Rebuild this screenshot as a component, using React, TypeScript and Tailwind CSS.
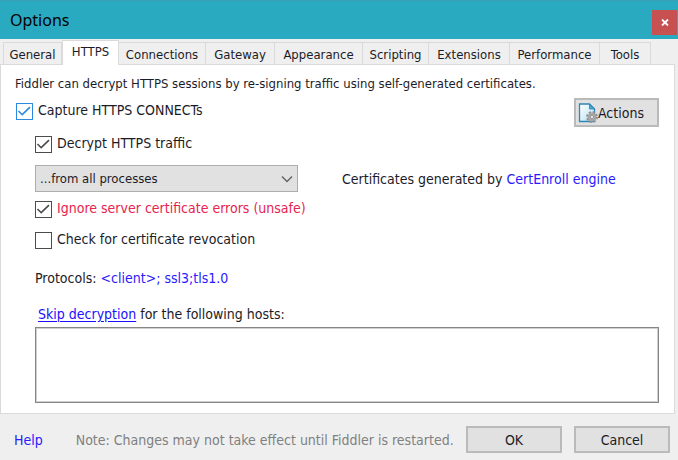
import { useState } from "react";
import type { ReactNode } from "react";
import clsx from "clsx";

const TABS = [
  { name: "General", width: "w-[59px]" },
  { name: "HTTPS", width: "w-[57px]" },
  { name: "Connections", width: "w-[87px]" },
  { name: "Gateway", width: "w-[69px]" },
  { name: "Appearance", width: "w-[88px]" },
  { name: "Scripting", width: "w-[66px]" },
  { name: "Extensions", width: "w-[81px]" },
  { name: "Performance", width: "w-[90px]" },
  { name: "Tools", width: "w-[51px]" },
];

interface CheckProps {
  checked: boolean;
  onChange: (value: boolean) => void;
  active?: boolean;
  danger?: boolean;
  children: ReactNode;
}

function Check({ checked, onChange, active, danger, children }: CheckProps) {
  return (
    <label className={clsx("flex w-fit items-end gap-[5px]", danger && "text-[#e8234f]")}>
      <span className={clsx("grid", active ? "text-[#2b8ade]" : "text-[#4c4c4c]")}>
        <input
          type="checkbox"
          checked={checked}
          onChange={(e) => onChange(e.target.checked)}
          className="col-start-1 row-start-1 size-[17px] appearance-none border border-current bg-white"
        />
        {checked && (
          <svg viewBox="0 0 17 17" className="pointer-events-none col-start-1 row-start-1 size-[17px]">
            <path d="M2.5 8 L6.2 11.7 L14 4.2" fill="none" stroke="currentColor" strokeWidth="1.6" />
          </svg>
        )}
      </span>
      <span className="pb-[2px]">{children}</span>
    </label>
  );
}

function ActionsIcon() {
  return (
    <svg viewBox="0 0 20 20" className="size-5 shrink-0">
      <defs>
        <linearGradient id="page" x1="0" y1="0" x2="1" y2="1">
          <stop offset="0" stopColor="#ffffff" />
          <stop offset="1" stopColor="#b5def2" />
        </linearGradient>
      </defs>
      <path d="M1.5 1 H11.5 L16.5 6 V18.5 H1.5 Z" fill="url(#page)" stroke="#2f87b5" strokeWidth="1.3" />
      <path d="M11.5 1 V6 H16.5 Z" fill="#4ba3cf" stroke="#2f87b5" strokeWidth="0.8" />
      <circle cx="14" cy="14" r="4.9" fill="none" stroke="#8c8c8c" strokeWidth="2" strokeDasharray="2.2 1.65" />
      <circle cx="14" cy="14" r="3.3" fill="#d8d8d8" stroke="#a4a4a4" strokeWidth="2.4" />
      <circle cx="14" cy="14" r="1.6" fill="#f0f0f0" stroke="#7a7a7a" strokeWidth="0.7" />
    </svg>
  );
}

export default function App() {
  const [tab, setTab] = useState("HTTPS");
  const [capture, setCapture] = useState(true);
  const [decrypt, setDecrypt] = useState(true);
  const [ignoreErrors, setIgnoreErrors] = useState(true);
  const [revocation, setRevocation] = useState(false);

  return (
    <div className="flex min-h-screen flex-col bg-[#efefef] font-['DejaVu_Sans_Condensed','Noto_Sans',sans-serif] text-[14px] leading-4 text-[#1c1c28]">
      <header className="flex h-[39px] items-center justify-between border-t border-[#3d9fb4] bg-[#29aac1] pl-[10px] pr-px">
        <h1 className="font-['Noto_Sans',sans-serif] text-[16px] text-black">Options</h1>
        <button aria-label="Close" className="mt-[5px] flex size-[25px] items-center justify-center bg-[#c75050]">
          <svg viewBox="0 0 8 7" className="h-[7px] w-2">
            <path d="M1 0.5 L7 6.5 M7 0.5 L1 6.5" stroke="white" strokeWidth="1.8" />
          </svg>
        </button>
      </header>

      <nav role="tablist" className="flex h-[25px] items-end pl-[3px] text-[13px]">
        {TABS.map(({ name, width }) => (
          <button
            key={name}
            role="tab"
            aria-selected={tab === name}
            onClick={() => setTab(name)}
            className={clsx(
              "shrink-0 whitespace-nowrap border-[#dadada]",
              width,
              tab === name
                ? "z-10 -mb-px h-[25px] border-x border-t bg-white pb-[2px]"
                : "h-[22px] border-r border-t bg-[#efefef] pt-[2px] first:border-l"
            )}
          >
            {name}
          </button>
        ))}
      </nav>

      <main className="mr-[3px] flex flex-1 flex-col border border-[#dadada] bg-white pb-[9px] pl-[14px] pr-[15px] pt-[11px]">
        <p className="whitespace-nowrap text-[13px]">
          Fiddler can decrypt HTTPS sessions by re-signing traffic using self-generated certificates.
        </p>
        <div className="mt-[6px] flex items-start justify-between">
          <div className="pl-px pt-1">
            <Check checked={capture} onChange={setCapture} active>
              Capture HTTPS CONNECTs
            </Check>
          </div>
          <button className="flex h-[29px] w-[85px] items-center border-2 border-[#bababa] bg-[#e1e1e1] pl-[2px]">
            <ActionsIcon />
            Actions
          </button>
        </div>

        <div className="flex flex-1 flex-col pl-5 pt-2">
          <Check checked={decrypt} onChange={setDecrypt}>
            Decrypt HTTPS traffic
          </Check>
          <div className="mt-3 flex items-center gap-11">
            <div className="grid w-[263px] items-center">
              <select
                aria-label="Decrypt traffic from"
                className="col-start-1 row-start-1 h-[27px] appearance-none border border-[#adadad] bg-[#e1e1e1] pl-1 text-[13px]"
              >
                <option>...from all processes</option>
                <option>...from browsers only</option>
                <option>...from non-browsers only</option>
                <option>...from remote clients only</option>
              </select>
              <svg
                viewBox="0 0 12 8"
                className="pointer-events-none col-start-1 row-start-1 mr-[5px] h-2 w-3 justify-self-end"
              >
                <path d="M1 1.5 L6 6.5 L11 1.5" fill="none" stroke="#666666" strokeWidth="1.5" />
              </svg>
            </div>
            <p className="whitespace-nowrap">
              Certificates generated by{" "}
              <a href="#engine" className="text-[#2a1aff]">
                CertEnroll engine
              </a>
            </p>
          </div>
          <div className="mt-2 flex flex-col gap-[13px]">
            <Check checked={ignoreErrors} onChange={setIgnoreErrors} danger>
              Ignore server certificate errors (unsafe)
            </Check>
            <Check checked={revocation} onChange={setRevocation}>
              Check for certificate revocation
            </Check>
          </div>
          <p className="mt-[21px]">
            Protocols:{" "}
            <a href="#protocols" className="text-[#2a1aff]">
              &lt;client&gt;; ssl3;tls1.0
            </a>
          </p>
          <label htmlFor="hosts" className="mt-5 pl-[3px]">
            <a href="#skip" className="text-[#1a10ff] underline underline-offset-2">
              Skip decryption
            </a>{" "}
            for the following hosts:
          </label>
          <textarea
            id="hosts"
            className="mt-[5px] h-[76px] resize-none border border-[#868686] bg-white ring-1 ring-inset ring-[#d0d0d0]"
          />
        </div>
      </main>

      <footer className="flex items-center pb-[7px] pl-[14px] pr-2 pt-3">
        <a href="#help" className="text-[#2a1aff]">
          Help
        </a>
        <p className="ml-[33px] flex-1 whitespace-nowrap text-[#808080]">
          Note: Changes may not take effect until Fiddler is restarted.
        </p>
        <div className="flex gap-3">
          <button className="h-[27px] w-24 border-2 border-[#bababa] bg-[#e1e1e1]">OK</button>
          <button className="h-[27px] w-24 border-2 border-[#bababa] bg-[#e1e1e1]">Cancel</button>
        </div>
      </footer>
    </div>
  );
}
